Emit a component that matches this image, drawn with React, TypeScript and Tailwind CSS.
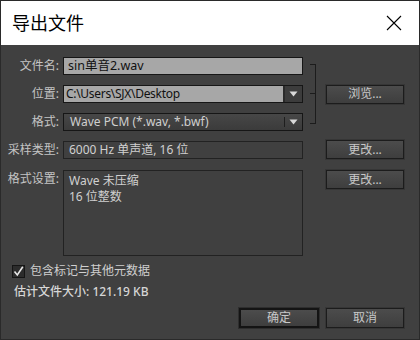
import { HTMLAttributes } from "react";

const font = "font-['Noto_Sans','Noto_Sans_CJK_SC',sans-serif]";

function Label({ children }: { children: string }) {
  return (
    <div className="w-[58px] shrink-0 text-right text-[12px] leading-[18px] text-[#c4c4c4]">
      {children}
    </div>
  );
}

function Arrow() {
  return (
    <svg width="9" height="6" viewBox="0 0 9 6">
      <path d="M0.5 0.5 H8.5 L4.5 5.5 Z" fill="#d8d8d8" />
    </svg>
  );
}

function DialogButton({
  children,
  primary,
  className,
}: {
  children: string;
  primary?: boolean;
  className?: string;
} & HTMLAttributes<HTMLDivElement>) {
  return (
    <div
      className={
        "flex h-[19px] w-[78px] items-center justify-center bg-gradient-to-b from-[#4c4c4c] to-[#3e3e3e] text-[12px] leading-[16px] text-[#c8c8c8] " +
        (primary
          ? "border-2 border-[#141414] outline outline-1 outline-[#2e2e2e]"
          : "border border-[#1c1c1c] outline outline-1 outline-[#363636]") +
        " " +
        (className ?? "")
      }
    >
      {children}
    </div>
  );
}

export default function App() {
  return (
    <div
      className={`flex h-[340px] w-[420px] flex-col border-x border-b border-[#2a2a2a] ${font}`}
    >
      {/* title bar */}
      <div className="flex h-[45px] shrink-0 items-center justify-between border-t border-[#2a2a2a] bg-white pl-[11px] pr-[17px]">
        <span className="text-[18px] leading-[24px] text-black">导出文件</span>
        <svg width="16" height="16" viewBox="0 0 16 16">
          <path d="M1 1 L15 15 M15 1 L1 15" stroke="#000" strokeWidth="1.1" />
        </svg>
      </div>

      {/* body */}
      <div className="flex flex-1 flex-col bg-[#404040] pt-[12px]">
        {/* file / location / format group */}
        <div className="flex items-center">
          <div className="flex flex-col gap-[10px]">
            <div className="flex items-center gap-[4px]">
              <Label>文件名:</Label>
              <div className="flex h-[18px] w-[240px] items-center border border-[#161616] bg-[#a7a7a7] px-[4px] text-[12.5px] leading-[16px] text-[#111]">
                sin单音2.wav
              </div>
            </div>
            <div className="flex items-center gap-[4px]">
              <Label>位置:</Label>
              <div className="flex h-[18px] w-[240px] border border-[#161616]">
                <div className="flex flex-1 items-center border-r-2 border-[#2a2a2a] bg-[#a7a7a7] pl-[2px] text-[12px] leading-[16px] tracking-[-0.3px] text-[#111]">
                  C:\Users\SJX\Desktop
                </div>
                <div className="flex w-[17px] items-center justify-center bg-[#3c3c3c]">
                  <Arrow />
                </div>
              </div>
            </div>
            <div className="flex items-center gap-[4px]">
              <Label>格式:</Label>
              <div className="flex h-[18px] w-[240px] border border-[#161616] bg-gradient-to-b from-[#474747] to-[#3b3b3b]">
                <div className="flex flex-1 items-center pl-[6px] text-[12px] leading-[16px] text-[#cfcfcf]">
                  Wave PCM (*.wav, *.bwf)
                </div>
                <div className="my-[3px] w-px bg-[#1e1e1e]" />
                <div className="flex w-[17px] items-center justify-center">
                  <Arrow />
                </div>
              </div>
            </div>
          </div>
          {/* bracket */}
          <div className="ml-[7px] flex flex-col">
            <div className="h-[30px] w-[6px] border-y border-r border-[#1c1c1c]" />
            <div className="h-[30px] w-[6px] border-b border-r border-[#1c1c1c]" />
          </div>
          <DialogButton className="ml-[10px]">浏览...</DialogButton>
        </div>

        {/* sample type */}
        <div className="mt-[9px] flex items-center">
          <div className="flex items-center gap-[4px]">
            <Label>采样类型:</Label>
            <div className="flex h-[18px] w-[240px] items-center border border-[#222] px-[5px] text-[12px] leading-[16px] text-[#d0d0d0]">
              6000 Hz 单声道, 16 位
            </div>
          </div>
          <DialogButton className="ml-[23px]">更改...</DialogButton>
        </div>

        {/* format settings */}
        <div className="mt-[11px] flex items-start">
          <div className="flex items-start gap-[4px]">
            <Label>格式设置:</Label>
            <div className="flex h-[86px] w-[240px] flex-col border border-[#222] px-[5px] pt-[2px] text-[12px] leading-[16px] text-[#d0d0d0]">
              <span className="leading-[16px]">Wave 未压缩</span>
              <span className="leading-[16px]">16 位整数</span>
            </div>
          </div>
          <DialogButton className="ml-[23px]">更改...</DialogButton>
        </div>

        {/* metadata checkbox */}
        <div className="mt-[7px] flex h-[16px] items-center gap-[5px] pl-[11px]">
          <div className="flex h-[13px] w-[13px] items-center justify-center border border-[#151515] bg-[#2c2c2c]">
            <svg width="11" height="11" viewBox="0 0 11 11">
              <path d="M1.5 5.5 L4.3 9 L9.8 0.8" fill="none" stroke="#e6e6e6" strokeWidth="1.6" />
            </svg>
          </div>
          <span className="text-[12px] leading-[16px] text-[#cfcfcf]">包含标记与其他元数据</span>
        </div>

        {/* estimated size */}
        <div className="mt-[5px] h-[16px] pl-[13px] text-[12px] leading-[16px] font-medium text-[#d6d6d6]">
          估计文件大小: 121.19 KB
        </div>

        {/* footer buttons */}
        <div className="mt-[8px] flex justify-end gap-[7px] pr-[15px]">
          <DialogButton primary className="h-[20px] w-[80px]">
            确定
          </DialogButton>
          <DialogButton className="h-[20px]">取消</DialogButton>
        </div>
      </div>
    </div>
  );
}
